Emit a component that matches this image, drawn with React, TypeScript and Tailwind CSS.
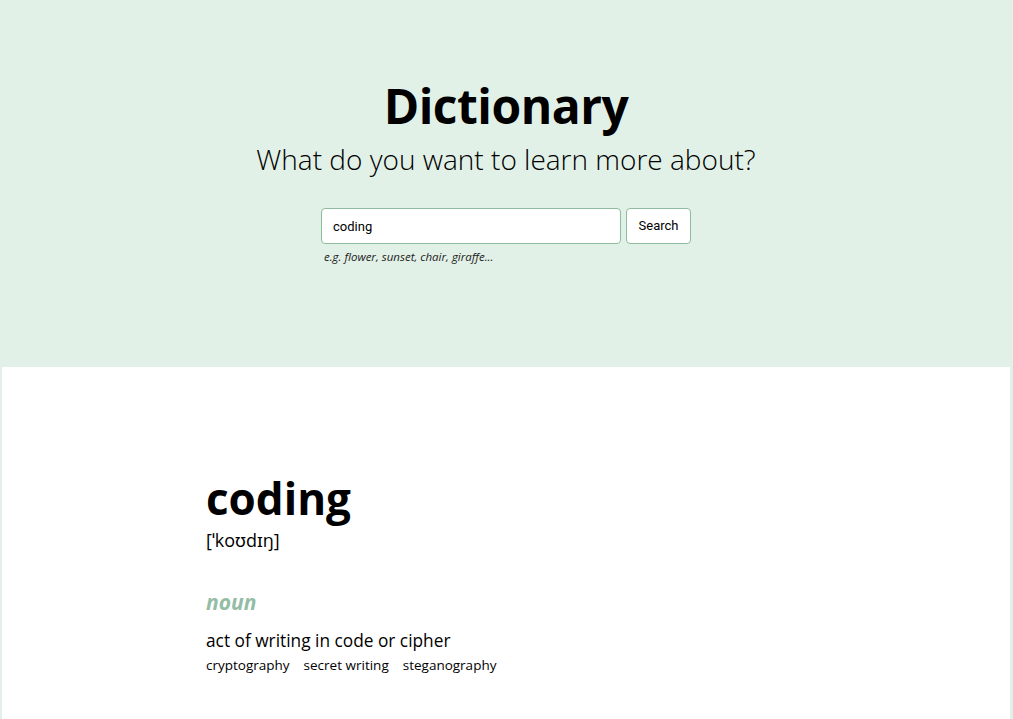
import React from "react";

export default function App() {
  const font = { fontFamily: '"Open Sans", "Noto Sans", sans-serif' };
  return (
    <div className="min-h-[719px] bg-[#e2f1e7] pl-[2px] pr-[3px]" style={font}>
      <header className="flex flex-col items-center pt-[76px] h-[367px]">
        <h1 className="text-[48px] font-bold leading-[60px] text-black tracking-[-0.5px]">Dictionary</h1>
        <p className="text-[28px] font-light leading-[40px] text-black mt-[3px]">What do you want to learn more about?</p>
        <form className="mt-[29px] flex flex-col" onSubmit={(e) => e.preventDefault()}>
          <div className="flex gap-[5px]">
            <input
              defaultValue="coding"
              className="w-[300px] h-[36px] rounded-[4px] border border-[#8fbc9f] bg-white px-[11px] text-[13px] text-black outline-none"
              style={{ fontFamily: 'Roboto, "Liberation Sans", sans-serif' }}
            />
            <button
              type="submit"
              className="h-[36px] w-[65px] rounded-[4px] border border-[#8fbc9f] bg-white text-[13px] text-black"
              style={{ fontFamily: 'Roboto, "Liberation Sans", sans-serif' }}
            >
              Search
            </button>
          </div>
          <span className="mt-[5px] ml-[3px] text-[11.5px] leading-[16px] italic text-[#222]">e.g. flower, sunset, chair, giraffe...</span>
        </form>
      </header>
      <main className="bg-white min-h-[352px]">
        <div className="mx-auto w-[600px] pt-[107px]">
          <h2 className="text-[44px] font-bold leading-[48px] text-black">coding</h2>
          <div className="text-[18px] leading-[24px] text-black mt-[6px]">[ˈkoʊdɪŋ]</div>
          <div className="mt-[36px] text-[21px] font-bold italic leading-[28px] text-[#93bda4]">noun</div>
          <div className="mt-[13px] text-[17.3px] leading-[24px] text-black">act of writing in code or cipher</div>
          <div className="mt-[2px] flex gap-[14px] text-[13.5px] leading-[20px] text-black">
            <span>cryptography</span>
            <span>secret writing</span>
            <span>steganography</span>
          </div>
        </div>
      </main>
    </div>
  );
}
